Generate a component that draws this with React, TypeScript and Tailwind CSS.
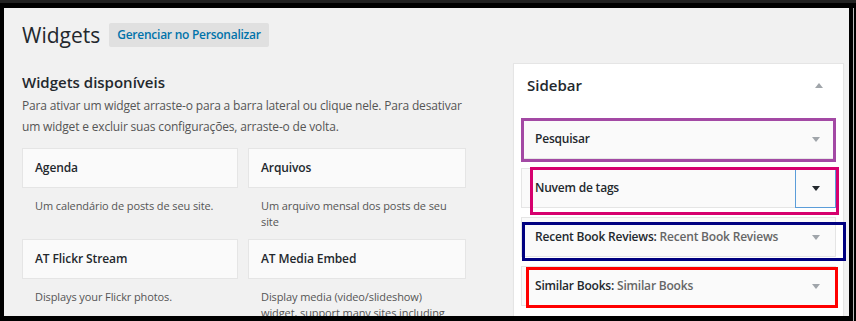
import type { ReactNode } from "react"

const AVAILABLE = [
  { title: "Agenda", desc: ["Um calendário de posts de seu site."] },
  { title: "Arquivos", desc: ["Um arquivo mensal dos posts de seu", "site"] },
  { title: "AT Flickr Stream", desc: ["Displays your Flickr photos."] },
  { title: "AT Media Embed", desc: ["Display media (video/slideshow)", "widget, support many sites including"] },
]

function Arrow({ up = false, dark = false }: { up?: boolean; dark?: boolean }) {
  return (
    <svg width="8" height="5" viewBox="0 0 8 5" className="block">
      <polygon points={up ? "0,5 8,5 4,0" : "0,0 8,0 4,5"} fill={dark ? "#23282d" : "#a0a5aa"} />
    </svg>
  )
}

function SidebarItem({
  children,
  outline,
  open = false,
}: {
  children: ReactNode
  outline: string
  open?: boolean
}) {
  return (
    <div className="relative h-[40px] border border-[#e5e5e5] bg-[#fafafa] flex items-center justify-between pl-[13px]">
      <span className="text-[12px] font-semibold tracking-[-0.2px] text-[#23282d] whitespace-nowrap">{children}</span>
      {open ? (
        <div className="self-stretch w-[41px] -my-px -mr-px border border-[#5b9dd9] flex items-center justify-center">
          <Arrow dark />
        </div>
      ) : (
        <div className="pr-[15px]">
          <Arrow />
        </div>
      )}
      {/* anotação colorida por cima do widget */}
      <div className={`absolute border-[3px] pointer-events-none ${outline}`} />
    </div>
  )
}

export default function App() {
  return (
    <div
      className="w-[856px] h-[321px] bg-black flex flex-col overflow-hidden"
      style={{ fontFamily: "'Open Sans', 'Liberation Sans', sans-serif" }}
    >
      <div className="h-[3px] bg-[#222] shrink-0" />
      <div className="flex pt-[5px] pl-[4px] flex-1">
        <div className="w-[845px] h-[308px] bg-[#f1f1f1] overflow-hidden pl-[18px] pt-[13px] shrink-0">
          {/* Header */}
          <div className="flex items-center">
            <h1 className="text-[21px] leading-[29px] text-[#23282d] font-normal">Widgets</h1>
            <button className="ml-[9px] mt-[-1px] h-[24px] px-[8px] rounded-[2px] bg-[#e0e0e0] text-[12px] font-semibold tracking-[-0.25px] text-[#0073aa]">
              Gerenciar no Personalizar
            </button>
          </div>

          <div className="flex mt-[13px]">
            {/* Widgets disponíveis */}
            <div className="w-[444px] pt-[9px]">
              <h2 className="text-[15px] leading-[20px] font-semibold text-[#23282d]">Widgets disponíveis</h2>
              <p className="mt-[3px] text-[12px] leading-[21px] tracking-[-0.17px] text-[#555] whitespace-nowrap">
                Para ativar um widget arraste-o para a barra lateral ou clique nele. Para desativar
                <br />
                um widget e excluir suas configurações, arraste-o de volta.
              </p>
              <div className="mt-[11px] grid grid-cols-[216px_218px] gap-x-[10px] gap-y-[9px]">
                {AVAILABLE.map((w) => (
                  <div key={w.title}>
                    <div className="h-[40px] border border-[#e5e5e5] bg-[#fafafa] flex items-center pl-[12px]">
                      <span className="text-[12px] font-semibold tracking-[-0.1px] text-[#23282d]">{w.title}</span>
                    </div>
                    <p className="pt-[10px] pl-[13px] text-[11px] leading-[16px] tracking-[-0.1px] text-[#555] whitespace-nowrap">
                      {w.desc.map((line, i) => (
                        <span key={i} className="block">{line}</span>
                      ))}
                    </p>
                  </div>
                ))}
              </div>
            </div>

            {/* Sidebar */}
            <div className="ml-[47px] w-[331px] h-[280px] border border-[#e5e5e5] bg-white shadow-[0_1px_1px_rgba(0,0,0,0.04)]">
              <div className="flex items-center justify-between pt-[9px] pl-[13px] pr-[20px]">
                <h2 className="text-[15px] leading-[24px] font-semibold text-[#23282d]">Sidebar</h2>
                <Arrow up />
              </div>
              <div className="mt-[22px] px-[7px] flex flex-col gap-[9px]">
                <SidebarItem outline="border-[#a349a4] top-[-2px] bottom-[-4px] left-[-1px] right-[-1px]">
                  Pesquisar
                </SidebarItem>
                <SidebarItem open outline="border-[#d6006e] top-[-2px] bottom-[-8px] left-[8px] right-[-4px]">
                  Nuvem de tags
                </SidebarItem>
                <SidebarItem outline="border-[#000080] top-[4px] bottom-[-5px] left-0 right-[-11px]">
                  Recent Book Reviews: <span className="text-[#666]">Recent Book Reviews</span>
                </SidebarItem>
                <SidebarItem outline="border-[#ff0000] top-0 bottom-[-3px] left-[4px] right-[-3px]">
                  Similar Books: <span className="text-[#666]">Similar Books</span>
                </SidebarItem>
              </div>
            </div>
          </div>
        </div>
        <div className="ml-[4px] w-px bg-[#bbb] self-stretch" />
      </div>
    </div>
  )
}
